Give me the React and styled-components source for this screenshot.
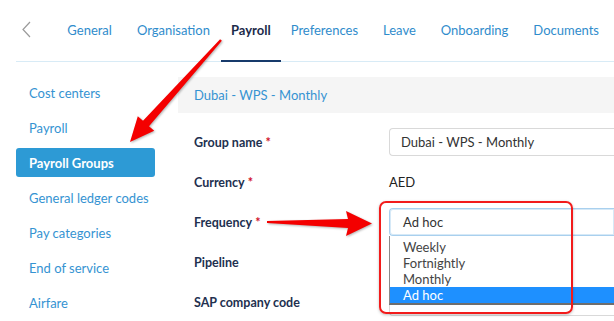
import React from 'react';
import styled, { createGlobalStyle } from 'styled-components';

const GlobalStyle = createGlobalStyle`
  html, body {
    margin: 0;
    padding: 0;
    background: #fff;
  }
  body {
    font-family: Lato, "Noto Sans", sans-serif;
  }
`;

const Page = styled.div`
  position: relative;
  width: 614px;
  height: 321px;
  overflow: hidden;
  background: #fff;
`;

const TabBar = styled.nav`
  display: flex;
  align-items: stretch;
  height: 61px;
  margin-left: 16px;
  border-bottom: 1px solid #d8ebf6;
`;

const Back = styled.div`
  display: flex;
  align-items: center;
  width: 43px;
  padding-left: 6px;
  padding-bottom: 2px;
`;

const Tab = styled.div`
  position: relative;
  display: flex;
  align-items: center;
  padding: 0 10px 2px;
  margin: ${({ $active }) => ($active ? '0 0 0 -4px' : '0 5px 0 0')};
  font-size: 13px;
  font-weight: ${({ $active }) => ($active ? 700 : 400)};
  color: ${({ $active }) => ($active ? '#1c2b4a' : '#2f8ccc')};
  white-space: nowrap;

  &:after {
    content: '';
    display: ${({ $active }) => ($active ? 'block' : 'none')};
    position: absolute;
    left: 0;
    right: 0;
    bottom: -1px;
    height: 2px;
    background: #173a6b;
  }
`;

const Body = styled.div`
  display: flex;
`;

const Sidebar = styled.aside`
  width: 162px;
  padding: 16px 0 0 16px;
  display: flex;
  flex-direction: column;
  gap: 6px;
`;

const NavItem = styled.div`
  width: 139px;
  height: 29px;
  display: flex;
  align-items: center;
  box-sizing: border-box;
  padding-left: 13px;
  border-radius: 3px;
  font-size: 13px;
  font-weight: ${({ $active }) => ($active ? 700 : 400)};
  color: ${({ $active }) => ($active ? '#fff' : '#3593d2')};
  background: ${({ $active }) => ($active ? '#2d9ad5' : 'transparent')};
`;

const Main = styled.main`
  flex: 1;
  padding-top: 15px;
`;

const PanelHeader = styled.div`
  height: 36px;
  display: flex;
  align-items: center;
  padding-left: 16px;
  background: #f5f5f5;
  font-size: 13px;
  color: #3593d2;
  margin-bottom: 9px;
`;

const Form = styled.div`
  display: flex;
  flex-direction: column;
`;

const Row = styled.div`
  display: grid;
  grid-template-columns: 195px 1fr;
  align-items: center;
  height: 40px;
  padding-left: 16px;
`;

const Label = styled.div`
  font-size: 12.5px;
  font-weight: 700;
  color: #22304f;
`;

const Req = styled.span`
  color: #d0112b;
  margin-left: 3px;
`;

const Field = styled.div`
  position: relative;
  height: 28px;
  box-sizing: border-box;
  display: flex;
  align-items: center;
  padding-left: ${({ $focus }) => ($focus ? '13px' : '11px')};
  border: 1px solid ${({ $focus }) => ($focus ? '#a9d0ee' : '#d9d9d9')};
  box-shadow: ${({ $focus }) => ($focus ? 'inset 0 0 0 1px #d6e9f7' : 'none')};
  border-radius: 4px 0 0 4px;
  border-right: none;
  font-size: 13px;
  color: #333;
`;

const Value = styled.div`
  font-size: 13px;
  color: #222;
`;

const Options = styled.ul`
  position: absolute;
  top: 27px;
  left: -1px;
  right: 0;
  margin: 0;
  padding: 3px 0 0;
  list-style: none;
  background: #fff;
  border-left: 1px solid #8a8a8a;
  border-bottom: 2px solid #6e6e6e;
  z-index: 2;
`;

const Option = styled.li`
  height: 16px;
  line-height: 16px;
  padding-left: 13px;
  font-size: 13px;
  color: ${({ $selected }) => ($selected ? '#fff' : '#444')};
  background: ${({ $selected }) => ($selected ? '#1e90ff' : 'transparent')};
`;

const Callout = styled.div`
  position: absolute;
  left: 379px;
  top: 201px;
  width: 194px;
  height: 113px;
  box-sizing: border-box;
  border: 2px solid #f21b1b;
  border-radius: 7px;
  box-shadow: 0 1px 3px rgba(0, 0, 0, 0.25);
  z-index: 3;
`;

const Arrows = styled.svg`
  position: absolute;
  left: 0;
  top: 0;
  z-index: 4;
  filter: drop-shadow(1px 1px 1px rgba(0, 0, 0, 0.3));
`;

const tabs = ['General', 'Organisation', 'Payroll', 'Preferences', 'Leave', 'Onboarding', 'Documents'];
const sections = ['Cost centers', 'Payroll', 'Payroll Groups', 'General ledger codes', 'Pay categories', 'End of service', 'Airfare'];
const frequencies = ['Weekly', 'Fortnightly', 'Monthly', 'Ad hoc'];

export default function App() {
  return (
    <Page>
      <GlobalStyle />
      <TabBar>
        <Back>
          <svg width="9" height="17" viewBox="0 0 9 17">
            <path d="M8 1 L1 8.5 L8 16" fill="none" stroke="#9a9a9a" strokeWidth="1.2" />
          </svg>
        </Back>
        {tabs.map((t) => (
          <Tab key={t} $active={t === 'Payroll'}>{t}</Tab>
        ))}
      </TabBar>

      <Body>
        <Sidebar>
          {sections.map((s) => (
            <NavItem key={s} $active={s === 'Payroll Groups'}>{s}</NavItem>
          ))}
        </Sidebar>

        <Main>
          <PanelHeader>Dubai - WPS - Monthly</PanelHeader>
          <Form>
            <Row>
              <Label>Group name<Req>*</Req></Label>
              <Field>Dubai - WPS - Monthly</Field>
            </Row>
            <Row>
              <Label>Currency<Req>*</Req></Label>
              <Value>AED</Value>
            </Row>
            <Row>
              <Label>Frequency<Req>*</Req></Label>
              <Field $focus>
                Ad hoc
                <Options>
                  {frequencies.map((f) => (
                    <Option key={f} $selected={f === 'Ad hoc'}>{f}</Option>
                  ))}
                </Options>
              </Field>
            </Row>
            <Row>
              <Label>Pipeline</Label>
              <Field />
            </Row>
            <Row>
              <Label>SAP company code</Label>
              <Field />
            </Row>
          </Form>
        </Main>
      </Body>

      <Callout />
      <Arrows width="614" height="321" viewBox="0 0 614 321">
        <polygon
          fill="#f40000"
          points="220.1,39.2 221.9,40.8 149,126.2 154.2,130.8 130,142 137.8,116.2 143,120.8"
        />
        <polygon
          fill="#f40000"
          points="267,221 348,219 346,211 372,223.5 346,236 348,228 267,223"
        />
      </Arrows>
    </Page>
  );
}
